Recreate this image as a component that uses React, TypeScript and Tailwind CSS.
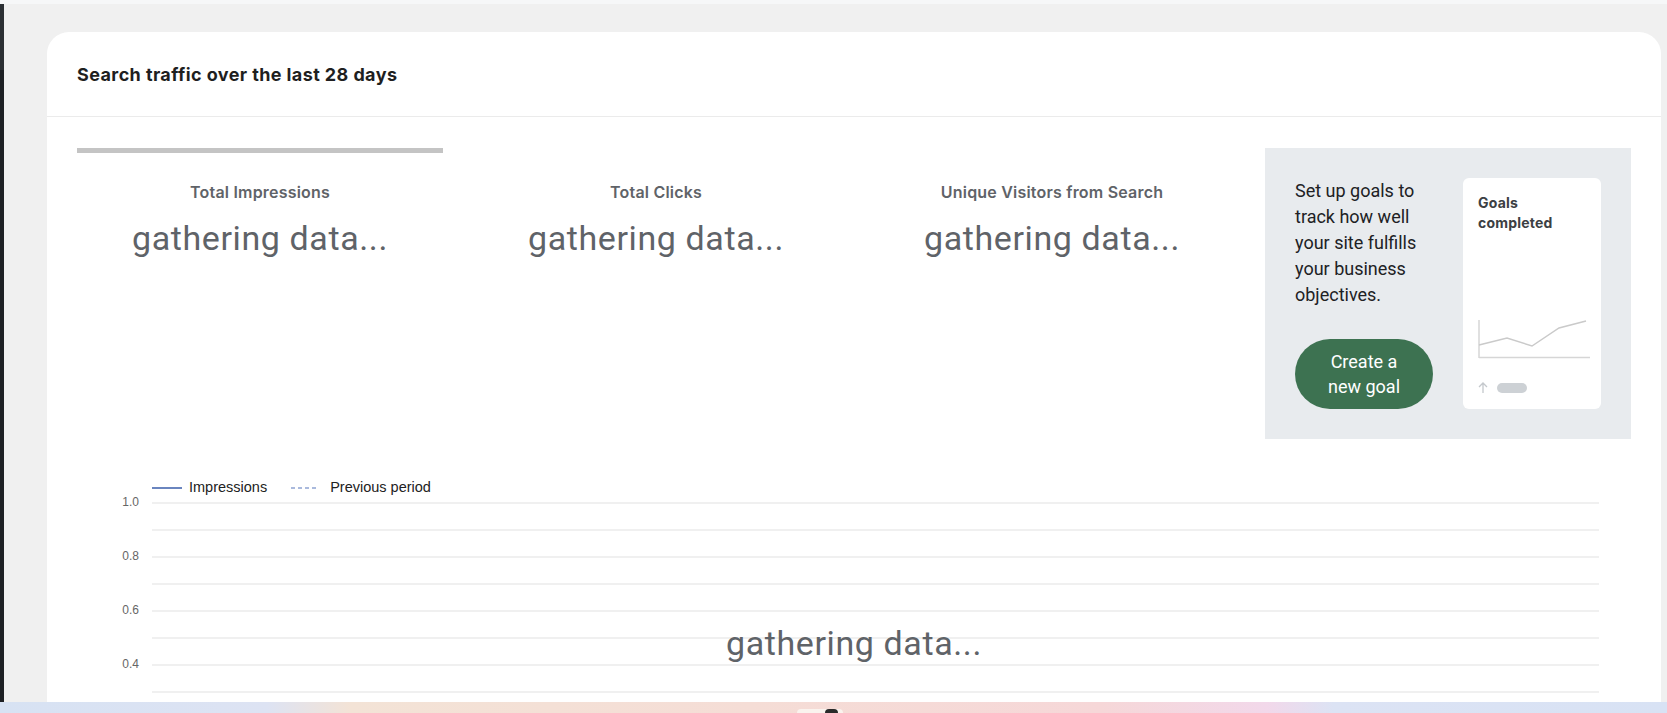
import React from 'react'

const metrics = [
  { label: 'Total Impressions', loading: true },
  { label: 'Total Clicks', loading: false },
  { label: 'Unique Visitors from Search', loading: false },
]

const rows = ['1.0', '', '0.8', '', '0.6', '', '0.4', '', '']

function MetricTile({ label, loading }: { label: string; loading: boolean }) {
  return (
    <div className="flex flex-col items-center">
      <div className={`h-[5px] w-full ${loading ? 'bg-[#c4c4c4]' : 'bg-transparent'}`} />
      <div className="mt-[29px] text-[16px] leading-[20px] font-semibold tracking-[0.2px] text-[#5f6368] font-['Inter',sans-serif]">
        {label}
      </div>
      <div className="mt-[16px] text-[34px] leading-[40px] tracking-[0.6px] text-[#5f6368] font-['Roboto',sans-serif] whitespace-nowrap">
        gathering data...
      </div>
    </div>
  )
}

function GoalsPromo() {
  return (
    <div className="h-[291px] bg-[#e8ebee] p-[30px] flex gap-[30px]">
      <div className="w-[138px] flex flex-col justify-between">
        <p className="text-[18px] leading-[26px] text-[#202124] font-['Roboto',sans-serif] whitespace-nowrap">
          Set up goals to<br />
          track how well<br />
          your site fulfills<br />
          your business<br />
          objectives.
        </p>
        <button className="h-[70px] w-[138px] rounded-full bg-[#3d7251] text-white text-[18px] leading-[25px] font-['Roboto',sans-serif]">
          Create a<br />new goal
        </button>
      </div>
      <div className="w-[138px] bg-white rounded-[6px] px-[15px] pt-[15px] pb-[16px] flex flex-col">
        <div className="text-[14px] leading-[20px] font-bold tracking-[0.2px] text-[#3c4043] font-['Inter',sans-serif]">
          Goals<br />completed
        </div>
        <div className="mt-auto">
          <svg width="112" height="40" viewBox="0 0 112 40" className="block">
            <line x1="1" y1="0" x2="1" y2="38" stroke="#d6d6d6" strokeWidth="1.5" />
            <line x1="1" y1="37.5" x2="112" y2="37.5" stroke="#d6d6d6" strokeWidth="1.5" />
            <polyline
              points="1,25 29,18 54,26 81,8 108,1"
              fill="none"
              stroke="#cacaca"
              strokeWidth="1.5"
            />
          </svg>
          <div className="mt-[22px] flex items-center gap-[9px]">
            <svg width="10" height="11" viewBox="0 0 10 11" className="block">
              <path d="M5 11V1M1 5l4-4 4 4" fill="none" stroke="#c4c8cc" strokeWidth="1.3" />
            </svg>
            <div className="h-[10px] w-[30px] rounded-full bg-[#cdd1d5]" />
          </div>
        </div>
      </div>
    </div>
  )
}

function TrafficChart() {
  return (
    <div className="mt-[42px] font-['Liberation_Sans',Arial,sans-serif]">
      <div className="h-[14px] pl-[75px] flex items-center text-[14.5px] text-[#222]">
        <span className="h-[2px] w-[30px] bg-[#6a85bf]" />
        <span className="ml-[7px]">Impressions</span>
        <svg width="28" height="2" viewBox="0 0 28 2" className="ml-[24px] block">
          <line x1="0" y1="1" x2="28" y2="1" stroke="#8fa4d2" strokeWidth="1.4" strokeDasharray="4 3" />
        </svg>
        <span className="ml-[11px]">Previous period</span>
      </div>
      <div className="relative mt-[7px]">
        {rows.map((label, i) => (
          <div key={i} className="h-[27px] flex">
            <div className="w-[62px] -mt-[7px] text-right text-[12px] leading-[14px] text-[#666]">{label}</div>
            <div className="flex-1 ml-[13px] mr-[32px] border-t-2 border-[#f0f0f0]" />
          </div>
        ))}
        <div className="absolute left-0 right-0 top-[121px] text-center text-[34px] leading-[40px] tracking-[0.6px] text-[#5f6368] font-['Roboto',sans-serif]">
          gathering data...
        </div>
      </div>
    </div>
  )
}

export default function App() {
  return (
    <div className="h-[713px] w-full flex flex-col bg-[#f0f0f0] overflow-hidden">
      <div className="h-[4px] bg-[#f6f7f8]" />
      <div className="flex-1 flex min-h-0">
        <div className="w-[4px] flex flex-col">
          <div className="h-[66px] bg-[#2b2f33]" />
          <div className="flex-1 bg-[#1d2024]" />
        </div>
        <div className="flex-1 pl-[43px] pr-[6px] pt-[28px] min-h-0">
          <div className="h-full bg-white rounded-t-[22px] overflow-hidden">
            <div className="h-[85px] px-[30px] flex items-center border-b border-[#ebebeb]">
              <h1 className="text-[18px] font-bold tracking-[0.4px] text-[#1f1f1f] font-['Inter',sans-serif]">
                Search traffic over the last 28 days
              </h1>
            </div>
            <div className="px-[30px] pt-[31px]">
              <div className="grid grid-cols-4 gap-[30px]">
                {metrics.map((m) => (
                  <MetricTile key={m.label} label={m.label} loading={m.loading} />
                ))}
                <GoalsPromo />
              </div>
              <TrafficChart />
            </div>
          </div>
        </div>
      </div>
      <div className="h-[11px] bg-[linear-gradient(90deg,#d7e2f3_0%,#dde3f3_16%,#f3e3d6_21%,#f5ddd6_45%,#f6d7d8_66%,#f2d8ea_76%,#dce3f4_80%,#d8e2f4_100%)] pl-[797px] pt-[7px]">
        <div className="h-[4px] w-[46px] rounded-t-[4px] bg-[#faf3ee] flex justify-end pr-[5px]">
          <div className="h-[4px] w-[13px] rounded-t-full bg-[#2a2a2a]" />
        </div>
      </div>
    </div>
  )
}
